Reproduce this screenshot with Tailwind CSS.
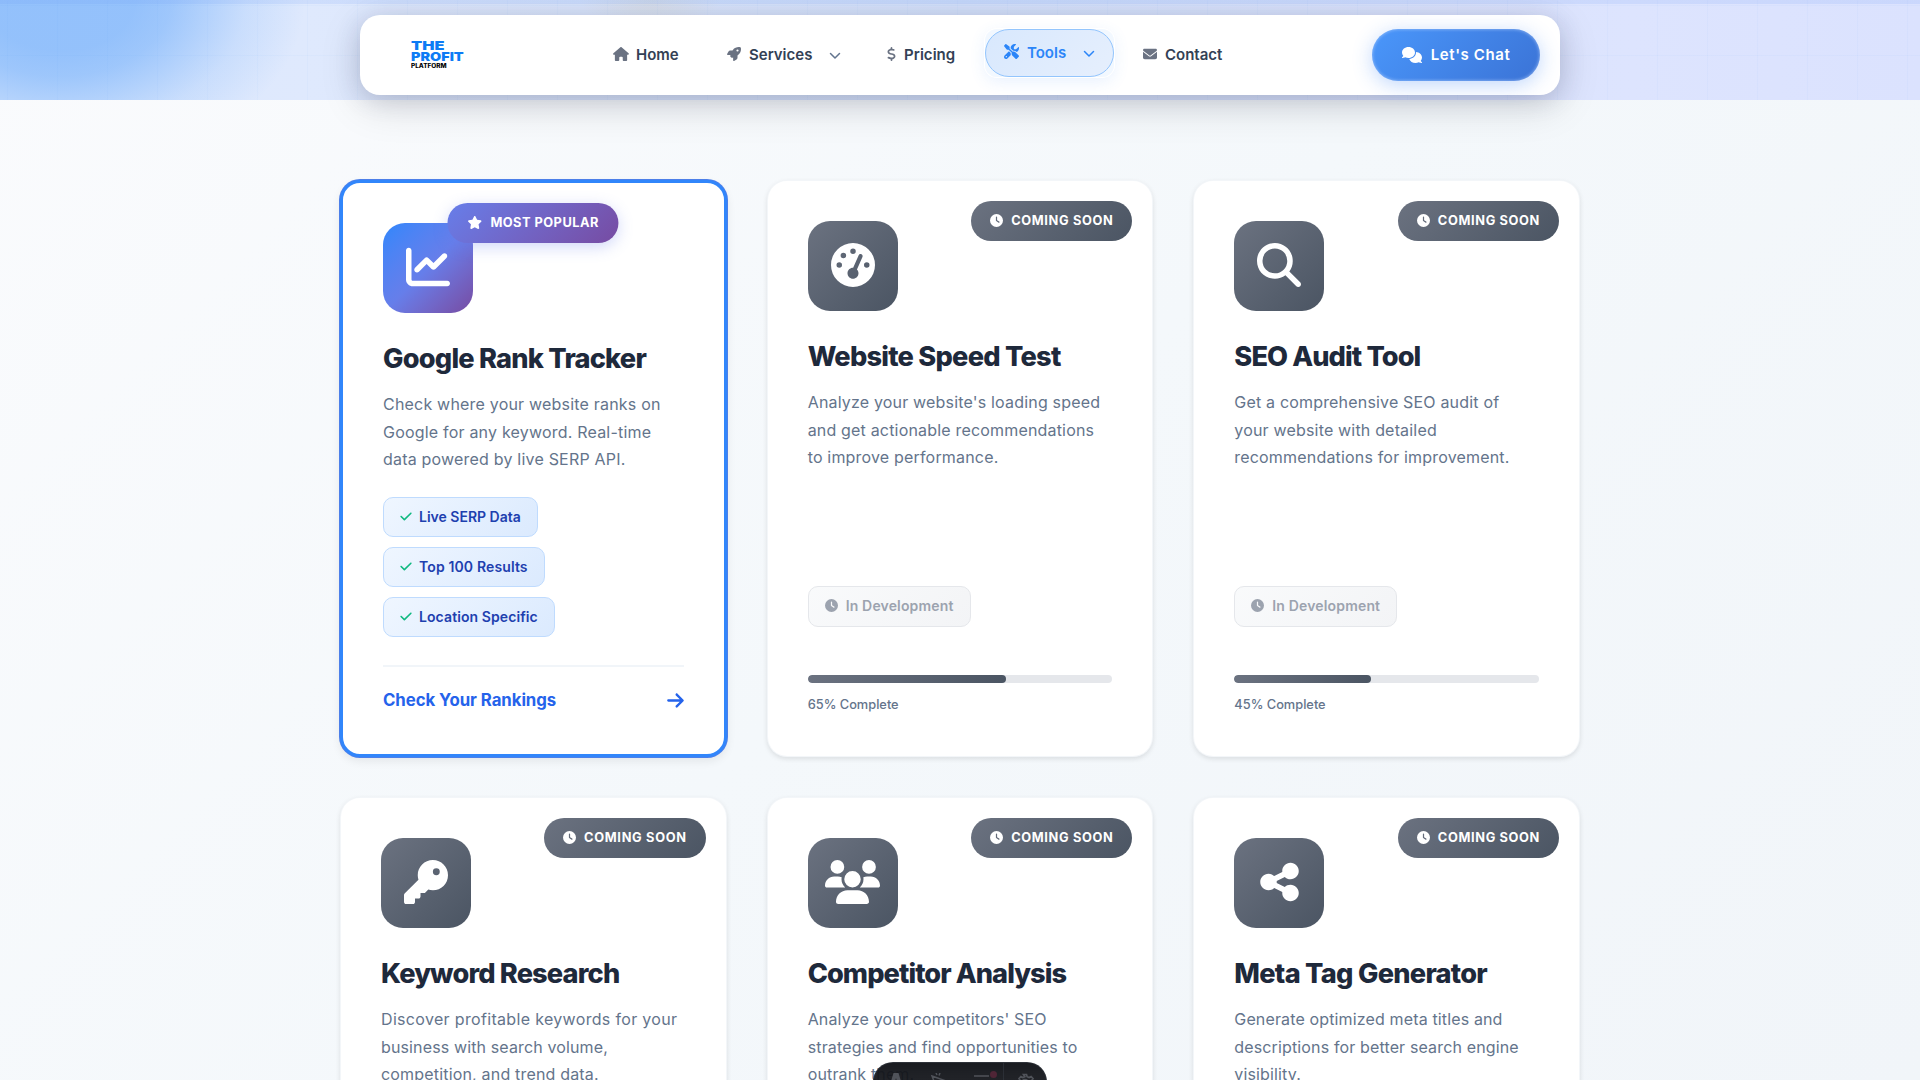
<!DOCTYPE html>
<html lang="en">
<head>
<meta charset="utf-8">
<title>The Profit Platform - Tools</title>
<script src="https://cdn.jsdelivr.net/npm/@tailwindcss/browser@4"></script>
</head>
<body class="relative h-[1080px] overflow-hidden bg-linear-135 from-[#fafbfd] via-[#f4f8fb] to-[#f1f5f9] font-['Inter',sans-serif] text-[#1e293b]">

<svg class="hidden">
  <symbol id="home" viewBox="0 0 576 512"><path d="M575.8 255.5c0 18-15 32.1-32 32.1l-32 0 .7 160.2c0 2.7-.2 5.4-.5 8.1l0 16.2c0 22.1-17.9 40-40 40l-16 0c-1.1 0-2.2 0-3.3-.1c-1.4 .1-2.8 .1-4.2 .1L416 512l-24 0c-22.1 0-40-17.9-40-40l0-24 0-64c0-17.7-14.3-32-32-32l-64 0c-17.7 0-32 14.3-32 32l0 64 0 24c0 22.1-17.9 40-40 40l-24 0-31.9 0c-1.5 0-3-.1-4.5-.2c-1.2 .1-2.4 .2-3.6 .2l-16 0c-22.1 0-40-17.9-40-40l0-112c0-.9 0-1.9 .1-2.8l0-69.7-32 0c-18 0-32-14-32-32.1c0-9 3-17 10-24L266.4 8c7-7 15-8 22-8s15 2 21 7L564.8 231.5c8 7 12 15 11 24z"/></symbol>
  <symbol id="rocket" viewBox="0 0 512 512"><path d="M156.6 384.9L125.7 354c-8.5-8.5-11.5-20.8-7.7-32.2c3-8.9 7-20.5 11.8-33.8L24 288c-8.6 0-16.6-4.6-20.9-12.1s-4.2-16.7 .2-24.1l52.5-88.5c13-21.9 36.5-35.3 61.9-35.3l82.3 0c2.4-4 4.8-7.7 7.2-11.3C289.1-4.1 411.1-8.1 483.9 5.3c11.6 2.1 20.6 11.2 22.8 22.8c13.4 72.9 9.3 194.8-111.4 276.7c-3.5 2.4-7.3 4.8-11.3 7.2v82.3c0 25.4-13.4 49-35.3 61.9l-88.5 52.5c-7.4 4.4-16.6 4.5-24.1 .2s-12.1-12.2-12.1-20.9V380.8c-14.1 4.9-26.4 8.9-35.7 11.9c-11.2 3.6-23.4 .5-31.8-7.8zM384 168a40 40 0 1 0 0-80 40 40 0 1 0 0 80z"/></symbol>
  <symbol id="dollar" viewBox="0 0 320 512"><path d="M160 0c17.7 0 32 14.3 32 32l0 35.7c1.6 .2 3.1 .4 4.7 .7c.4 .1 .7 .1 1.1 .2l48 8.8c17.4 3.2 28.9 19.9 25.7 37.2s-19.9 28.9-37.2 25.7l-47.5-8.7c-31.3-4.6-58.9-1.5-78.3 6.2s-27.2 18.3-29 28.1c-2 10.7-.5 16.7 1.2 20.4c1.8 3.9 5.5 8.3 12.8 13.2c16.3 10.7 41.3 17.7 73.7 26.3l2.9 .8c28.6 7.6 63.6 16.8 89.6 33.8c14.2 9.3 27.6 21.9 35.9 39.5c8.5 17.9 10.3 37.9 6.4 59.2c-6.9 38-33.1 63.4-65.6 76.7c-13.7 5.6-28.6 9.2-44.4 11l0 33.4c0 17.7-14.3 32-32 32s-32-14.3-32-32l0-34.9c-.4-.1-.9-.1-1.3-.2l-.2 0c-24.4-3.8-64.5-14.3-91.5-26.3c-16.1-7.2-23.4-26.1-16.2-42.2s26.1-23.4 42.2-16.2c20.9 9.3 55.3 18.5 75.2 21.6c31.9 4.7 58.2 2 76-5.3c16.9-6.9 24.6-16.9 26.8-28.9c1.9-10.6 .4-16.7-1.3-20.4c-1.9-4-5.6-8.4-13-13.3c-16.4-10.7-41.5-17.7-74-26.3l-2.8-.7C119.4 279.3 84.4 270 58.4 253c-14.2-9.3-27.5-22-35.8-39.6c-8.4-17.9-10.1-37.9-6.1-59.2C23.7 116 52.3 91.2 84.8 78.3c13.3-5.3 27.9-8.9 43.2-11L128 32c0-17.7 14.3-32 32-32z"/></symbol>
  <symbol id="tools" viewBox="0 0 512 512"><path d="M78.6 5C69.1-2.4 55.6-1.5 47 7L7 47c-8.5 8.5-9.4 22-2.1 31.6l80 104c4.5 5.9 11.6 9.4 19 9.4l54.1 0 109 109c-14.7 29-10 65.4 14.3 89.6l112 112c12.5 12.5 32.8 12.5 45.3 0l64-64c12.5-12.5 12.5-32.8 0-45.3l-112-112c-24.2-24.2-60.6-29-89.6-14.3l-109-109 0-54.1c0-7.5-3.5-14.5-9.4-19L78.6 5zM19.9 396.1C7.2 408.8 0 426.1 0 444.1C0 481.6 30.4 512 67.9 512c18 0 35.3-7.2 48-19.9L233.7 374.3c-7.8-20.9-9-43.6-3.6-65.1l-61.7-61.7L19.9 396.1zM512 144c0-10.5-1.1-20.7-3.2-30.5c-2.4-11.2-16.1-14.1-24.2-6l-63.9 63.9c-3 3-7.1 4.7-11.3 4.7L352 176c-8.8 0-16-7.2-16-16l0-57.4c0-4.2 1.7-8.3 4.7-11.3l63.9-63.9c8.1-8.1 5.2-21.8-6-24.2C388.7 1.1 378.5 0 368 0C288.5 0 224 64.5 224 144l0 .8 85.3 85.3c36-9.1 75.8 .5 104 28.7L429 274.5c49-23 83-72.8 83-130.5zM56 432a24 24 0 1 1 48 0 24 24 0 1 1 -48 0z"/></symbol>
  <symbol id="envelope" viewBox="0 0 512 512"><path d="M48 64C21.5 64 0 85.5 0 112c0 15.1 7.1 29.3 19.2 38.4L236.8 313.6c11.4 8.5 27 8.5 38.4 0L492.8 150.4c12.1-9.1 19.2-23.3 19.2-38.4c0-26.5-21.5-48-48-48L48 64zM0 176L0 384c0 35.3 28.7 64 64 64l384 0c35.3 0 64-28.7 64-64l0-208L294.4 339.2c-22.8 17.1-54 17.1-76.8 0L0 176z"/></symbol>
  <symbol id="comments" viewBox="0 0 640 512"><path d="M208 352c114.9 0 208-78.8 208-176S322.9 0 208 0S0 78.8 0 176c0 38.6 14.7 74.3 39.6 103.4c-3.5 9.4-8.7 17.7-14.2 24.7c-4.8 6.2-9.7 11-13.3 14.3c-1.8 1.6-3.3 2.9-4.3 3.7c-.5 .4-.9 .7-1.1 .8l-.2 .2C1 327.2-1.4 334.4 .8 340.9S9.1 352 16 352c21.8 0 43.8-5.6 62.1-12.5c9.2-3.5 17.8-7.4 25.2-11.4C134.1 343.3 169.8 352 208 352zM448 176c0 112.3-99.1 196.9-216.5 207C255.8 457.4 336.4 512 432 512c38.2 0 73.9-8.7 104.7-23.9c7.5 4 16 7.9 25.2 11.4c18.3 6.9 40.3 12.5 62.1 12.5c6.9 0 13.1-4.5 15.2-11.1c2.1-6.6-.2-13.8-5.8-17.9l-.2-.2c-.2-.2-.6-.4-1.1-.8c-1-.8-2.5-2-4.3-3.7c-3.6-3.3-8.5-8.1-13.3-14.3c-5.5-7-10.7-15.4-14.2-24.7c24.9-29 39.6-64.7 39.6-103.4c0-92.8-84.9-168.9-192.6-175.5c.4 5.1 .6 10.3 .6 15.5z"/></symbol>
  <symbol id="star" viewBox="0 0 576 512"><path d="M316.9 18C311.6 7 300.4 0 288.1 0s-23.4 7-28.8 18L195 150.3 51.4 171.5c-12 1.8-22 10.2-25.7 21.7s-.7 24.2 7.9 32.7L137.8 329 113.2 474.7c-2 12 3 24.2 12.9 31.3s23 8 33.8 2.3l128.3-68.5 128.3 68.5c10.8 5.7 23.9 4.9 33.8-2.3s14.9-19.3 12.9-31.3L438.5 329 542.7 225.9c8.6-8.5 11.7-21.2 7.9-32.7s-13.7-19.9-25.7-21.7L381.2 150.3 316.9 18z"/></symbol>
  <symbol id="clock" viewBox="0 0 512 512"><path d="M256 0a256 256 0 1 1 0 512A256 256 0 1 1 256 0zM232 120l0 136c0 8 4 15.5 10.7 20l96 64c11 7.4 25.9 4.4 33.3-6.7s4.4-25.9-6.7-33.3L280 243.2 280 120c0-13.3-10.7-24-24-24s-24 10.7-24 24z"/></symbol>
  <symbol id="chart" viewBox="0 0 512 512"><path d="M64 64c0-17.7-14.3-32-32-32S0 46.3 0 64L0 400c0 44.2 35.8 80 80 80l400 0c17.7 0 32-14.3 32-32s-14.3-32-32-32L80 416c-8.8 0-16-7.2-16-16L64 64zm406.6 86.6c12.5-12.5 12.5-32.8 0-45.3s-32.8-12.5-45.3 0L320 210.7l-57.4-57.4c-12.5-12.5-32.8-12.5-45.3 0l-112 112c-12.5 12.5-12.5 32.8 0 45.3s32.8 12.5 45.3 0L240 221.3l57.4 57.4c12.5 12.5 32.8 12.5 45.3 0l128-128z"/></symbol>
  <symbol id="gauge" viewBox="0 0 512 512"><path d="M0 256a256 256 0 1 1 512 0A256 256 0 1 1 0 256zM288 96a32 32 0 1 0 -64 0 32 32 0 1 0 64 0zM256 416c35.3 0 64-28.7 64-64c0-17.4-6.9-33.1-18.1-44.6L366 161.7c5.3-12.1-.2-26.3-12.3-31.6s-26.3 .2-31.6 12.3L257.9 288c-.6 0-1.3 0-1.9 0c-35.3 0-64 28.7-64 64s28.7 64 64 64zM176 144a32 32 0 1 0 -64 0 32 32 0 1 0 64 0zM96 288a32 32 0 1 0 0-64 32 32 0 1 0 0 64zm352-32a32 32 0 1 0 -64 0 32 32 0 1 0 64 0z"/></symbol>
  <symbol id="search" viewBox="0 0 512 512"><path d="M416 208c0 45.9-14.9 88.3-40 122.7L502.6 457.4c12.5 12.5 12.5 32.8 0 45.3s-32.8 12.5-45.3 0L330.7 376c-34.4 25.2-76.8 40-122.7 40C93.1 416 0 322.9 0 208S93.1 0 208 0S416 93.1 416 208zM208 352a144 144 0 1 0 0-288 144 144 0 1 0 0 288z"/></symbol>
  <symbol id="key" viewBox="0 0 512 512"><path d="M336 352c97.2 0 176-78.8 176-176S433.2 0 336 0S160 78.8 160 176c0 18.7 2.9 36.8 8.3 53.7L7 391c-4.5 4.5-7 10.6-7 17l0 80c0 13.3 10.7 24 24 24l80 0c13.3 0 24-10.7 24-24l0-40 40 0c13.3 0 24-10.7 24-24l0-40 40 0c6.4 0 12.5-2.5 17-7l33.3-33.3c16.9 5.4 35 8.3 53.7 8.3zM376 96a40 40 0 1 1 0 80 40 40 0 1 1 0-80z"/></symbol>
  <symbol id="users" viewBox="0 0 640 512"><path d="M144 0a80 80 0 1 1 0 160A80 80 0 1 1 144 0zM512 0a80 80 0 1 1 0 160A80 80 0 1 1 512 0zM0 298.7C0 239.8 47.8 192 106.7 192l42.7 0c15.9 0 31 3.5 44.6 9.7c-1.3 7.2-1.9 14.7-1.9 22.3c0 38.2 16.8 72.5 43.3 96c-.2 0-.4 0-.7 0L21.3 320C9.6 320 0 310.4 0 298.7zM405.3 320c-.2 0-.4 0-.7 0c26.6-23.5 43.3-57.8 43.3-96c0-7.6-.7-15-1.9-22.3c13.6-6.3 28.7-9.7 44.6-9.7l42.7 0C592.2 192 640 239.8 640 298.7c0 11.8-9.6 21.3-21.3 21.3l-213.3 0zM224 224a96 96 0 1 1 192 0 96 96 0 1 1 -192 0zM128 485.3C128 411.7 187.7 352 261.3 352l117.3 0C452.3 352 512 411.7 512 485.3c0 14.7-11.9 26.7-26.7 26.7l-330.7 0c-14.7 0-26.7-11.9-26.7-26.7z"/></symbol>
  <symbol id="share" viewBox="0 0 448 512"><path d="M352 224c53 0 96-43 96-96s-43-96-96-96s-96 43-96 96c0 4 .2 8 .7 11.9l-94.1 47C145.4 170.2 121.9 160 96 160c-53 0-96 43-96 96s43 96 96 96c25.9 0 49.4-10.2 66.6-26.9l94.1 47c-.5 3.9-.7 7.8-.7 11.9c0 53 43 96 96 96s96-43 96-96s-43-96-96-96c-25.9 0-49.4 10.2-66.6 26.9l-94.1-47c.5-3.9 .7-7.8 .7-11.9s-.2-8-.7-11.9l94.1-47C302.6 213.8 326.1 224 352 224z"/></symbol>
  <symbol id="arrow" viewBox="0 0 448 512"><path d="M438.6 278.6c12.5-12.5 12.5-32.8 0-45.3l-160-160c-12.5-12.5-32.8-12.5-45.3 0s-12.5 32.8 0 45.3L338.8 224 32 224c-17.7 0-32 14.3-32 32s14.3 32 32 32l306.7 0L233.4 393.4c-12.5 12.5-12.5 32.8 0 45.3s32.8 12.5 45.3 0l160-160z"/></symbol>
  <symbol id="check" viewBox="0 0 448 512"><path d="M438.6 105.4c12.5 12.5 12.5 32.8 0 45.3l-256 256c-12.5 12.5-32.8 12.5-45.3 0l-128-128c-12.5-12.5-12.5-32.8 0-45.3s32.8-12.5 45.3 0L160 338.7 393.4 105.4c12.5-12.5 32.8-12.5 45.3 0z"/></symbol>
  <symbol id="chevron" viewBox="0 0 12 8"><path d="M1.5 1.5 6 6l4.500-4.500" fill="none" stroke="currentColor" stroke-width="1.500" stroke-linecap="round" stroke-linejoin="round"/></symbol>
</svg>

<!-- hero strip behind the navigation -->
<div class="h-[100px] w-full overflow-hidden bg-[linear-gradient(to_bottom,rgba(100,150,245,0.14)_4px,transparent_4px),radial-gradient(ellipse_70px_30px_at_650px_0px,rgba(214,200,160,0.2),transparent),radial-gradient(ellipse_245px_170px_at_60px_0px,rgba(96,165,250,0.58)_30%,rgba(96,165,250,0.5)_45%,rgba(96,165,250,0.16)_76%,transparent_100%),linear-gradient(90deg,#dbe8fd_0%,#dfe9fd_16%,#d5e2fb_50%,#dde4fe_85%,#dbe2fe_100%)]">
  <div class="h-full w-full bg-[linear-gradient(rgba(59,130,246,0.03)_1px,transparent_1px),linear-gradient(90deg,rgba(59,130,246,0.03)_1px,transparent_1px)] bg-[size:50px_50px] bg-[position:7px_5px]"></div>
</div>

<header class="absolute top-[15px] left-[360px] z-10 flex h-20 w-[1200px] items-center rounded-[20px] bg-white pr-5 pl-[51px] shadow-[0_10px_40px_rgba(0,0,0,0.15),0_4px_24px_rgba(80,90,150,0.18)]">
  <div class="mt-px flex w-[202px] flex-col items-start">
    <div class="h-[10px] origin-left scale-x-[1.36] text-[12px] leading-[10px] font-black text-[#0d7bf5]">THE</div>
    <div class="h-[12px] origin-left scale-x-[1.2] text-[12px] leading-[12px] font-black text-[#0d7bf5]">PROFIT</div>
    <div class="h-[7px] origin-left scale-x-[1.15] text-[5.600px] leading-[7px] font-extrabold text-black">PLATFORM</div>
  </div>
  <nav class="flex flex-1 items-center text-[15px] font-semibold text-[#334155]">
    <a class="flex w-[114px] items-center gap-[7px]"><svg class="-mt-0.5 h-[14px] w-4 fill-gray-500"><use href="#home"/></svg>Home</a>
    <a class="flex w-[160px] items-center"><svg class="-mt-0.5 mr-2 size-[14px] fill-gray-500"><use href="#rocket"/></svg>Services<svg class="mt-0.5 ml-[17px] h-2 w-3 text-slate-500"><use href="#chevron"/></svg></a>
    <a class="flex w-[98px] items-center tracking-[0.05px]"><svg class="-mt-0.5 mr-2 h-[14px] w-[9px] fill-gray-500"><use href="#dollar"/></svg>Pricing</a>
    <div class="-mt-1 w-[129px] rounded-[12px] bg-blue-50/80 shadow-[0_4px_16px_rgba(59,130,246,0.12)] ring-1 ring-white">
      <a class="flex h-12 items-center rounded-[24px] border border-[#93c5fd] bg-linear-135 from-[#d8e8fd] to-[#e6effd] pl-[18px] text-[#2b85f8]"><svg class="-mt-1 mr-2 size-[15px] fill-current"><use href="#tools"/></svg><span>Tools</span><svg class="mt-0.5 ml-[17px] h-2 w-3"><use href="#chevron"/></svg></a>
    </div>
    <a class="ml-[29px] flex items-center"><svg class="-mt-0.5 mr-2 size-[14px] fill-gray-500"><use href="#envelope"/></svg>Contact</a>
  </nav>
  <a class="flex h-[52px] w-[168px] items-center justify-center gap-[9px] rounded-[26px] bg-linear-135 from-[#4a97fb] to-[#3b73d6] text-[15px] font-semibold tracking-[0.600px] text-white shadow-[0_4px_20px_rgba(59,130,246,0.32),inset_0_0_3px_1px_rgba(190,215,255,0.45)]"><svg class="h-4 w-5 fill-white"><use href="#comments"/></svg>Let's Chat</a>
</header>

<main class="mx-auto mt-20 grid w-[1240px] grid-cols-3 gap-10">

  <article class="relative flex h-[577px] flex-col items-start rounded-[20px] border-3 border-[#3186fb] bg-white p-10 shadow-[0_0_0_1px_#4c7fe9,0_4px_10px_rgba(0,0,0,0.08)]">
    <div class="absolute top-5 left-1/2 flex h-10 -translate-x-1/2 items-center rounded-[20px] bg-linear-135 from-[#667eea] to-[#764ba2] px-5 text-[12.800px] font-bold tracking-[0.480px] whitespace-nowrap text-white shadow-[0_4px_15px_rgba(102,126,234,0.3)]"><svg class="-mt-0.5 mr-2 h-[13px] w-[14.600px] fill-white"><use href="#star"/></svg>MOST POPULAR</div>
    <div class="flex size-[90px] items-center justify-center rounded-[22px] bg-linear-135 from-[#2d87fc] via-[#667eea] to-[#764ba2]"><svg class="-mt-0.5 size-11 fill-white"><use href="#chart"/></svg></div>
    <h3 class="mt-[26px] text-[27.200px] leading-[40px] font-extrabold tracking-[-0.780px] whitespace-nowrap">Google Rank Tracker</h3>
    <p class="mt-3 text-base leading-[27.500px] tracking-[0.200px] text-[#64748b]">Check where your website ranks on<br>Google for any keyword. Real-time<br>data powered by live SERP API.</p>
    <div class="mt-[23px] flex flex-col items-start gap-2.5 text-[14px] font-semibold text-[#1e40af]">
      <span class="flex h-10 items-center rounded-[10px] border border-[#bfdbfe] bg-linear-135 from-[#eff6ff] to-[#dbeafe] px-4 pb-px"><svg class="mr-[7px] h-[13px] w-3 fill-[#10b981]"><use href="#check"/></svg>Live SERP Data</span>
      <span class="flex h-10 items-center rounded-[10px] border border-[#bfdbfe] bg-linear-135 from-[#eff6ff] to-[#dbeafe] px-4 pb-px tracking-[0.130px]"><svg class="mr-[7px] h-[13px] w-3 fill-[#10b981]"><use href="#check"/></svg>Top 100 Results</span>
      <span class="flex h-10 items-center rounded-[10px] border border-[#bfdbfe] bg-linear-135 from-[#eff6ff] to-[#dbeafe] px-4 pb-px tracking-[0.090px]"><svg class="mr-[7px] h-[13px] w-3 fill-[#10b981]"><use href="#check"/></svg>Location Specific</span>
    </div>
    <a class="mt-7 flex w-full items-center justify-between border-t-2 border-[#f1f5f9] pt-5 text-[16.800px] leading-[26px] font-bold tracking-[-0.060px] text-[#2563eb]">Check Your Rankings<svg class="mt-0.5 h-[19px] w-[17px] fill-current"><use href="#arrow"/></svg></a>
  </article>

  <article class="relative flex h-[577px] flex-col items-start rounded-[20px] border border-slate-200/40 bg-white p-10 shadow-[0_2px_5px_rgba(0,0,0,0.10)]">
    <div class="absolute top-5 right-5 flex h-10 items-center rounded-[20px] bg-linear-135 from-[#6b7280] to-[#4b5563] px-[19px] text-[12.800px] font-bold tracking-[0.640px] whitespace-nowrap text-white"><svg class="-mt-0.5 mr-2 size-[13px] fill-white"><use href="#clock"/></svg>COMING SOON</div>
    <div class="flex size-[90px] items-center justify-center rounded-[22px] bg-linear-135 from-[#6b7280] to-[#4b5563]"><svg class="-mt-0.5 size-11 fill-white"><use href="#gauge"/></svg></div>
    <h3 class="mt-[26px] text-[27.200px] leading-[40px] font-extrabold tracking-[-0.760px] whitespace-nowrap">Website Speed Test</h3>
    <p class="mt-3 text-base leading-[27.500px] tracking-[0.180px] text-[#64748b]">Analyze your website's loading speed<br>and get actionable recommendations<br>to improve performance.</p>
    <span class="mt-auto flex h-[41px] items-center rounded-[10px] border border-gray-200 bg-linear-135 from-gray-50 to-gray-100 px-4 pb-0.5 text-[14px] font-semibold tracking-[0.160px] text-[#9ca3af]"><svg class="mr-2 size-[13px] fill-current"><use href="#clock"/></svg>In Development</span>
    <div class="mt-12 h-2 w-full overflow-hidden rounded-[4px] bg-gray-200"><div class="h-full rounded-[4px] bg-linear-90 from-[#6b7280] to-[#4b5563]" style="width:65%"></div></div>
    <p class="mt-3 h-[21px] text-[12.800px] leading-5 font-medium text-[#64748b]">65% Complete</p>
  </article>

  <article class="relative flex h-[577px] flex-col items-start rounded-[20px] border border-slate-200/40 bg-white p-10 shadow-[0_2px_5px_rgba(0,0,0,0.10)]">
    <div class="absolute top-5 right-5 flex h-10 items-center rounded-[20px] bg-linear-135 from-[#6b7280] to-[#4b5563] px-[19px] text-[12.800px] font-bold tracking-[0.640px] whitespace-nowrap text-white"><svg class="-mt-0.5 mr-2 size-[13px] fill-white"><use href="#clock"/></svg>COMING SOON</div>
    <div class="flex size-[90px] items-center justify-center rounded-[22px] bg-linear-135 from-[#6b7280] to-[#4b5563]"><svg class="-mt-0.5 size-11 fill-white"><use href="#search"/></svg></div>
    <h3 class="mt-[26px] text-[27.200px] leading-[40px] font-extrabold tracking-[-0.900px] whitespace-nowrap">SEO Audit Tool</h3>
    <p class="mt-3 text-base leading-[27.500px] tracking-[0.180px] text-[#64748b]">Get a comprehensive SEO audit of<br>your website with detailed<br>recommendations for improvement.</p>
    <span class="mt-auto flex h-[41px] items-center rounded-[10px] border border-gray-200 bg-linear-135 from-gray-50 to-gray-100 px-4 pb-0.5 text-[14px] font-semibold tracking-[0.160px] text-[#9ca3af]"><svg class="mr-2 size-[13px] fill-current"><use href="#clock"/></svg>In Development</span>
    <div class="mt-12 h-2 w-full overflow-hidden rounded-[4px] bg-gray-200"><div class="h-full rounded-[4px] bg-linear-90 from-[#6b7280] to-[#4b5563]" style="width:45%"></div></div>
    <p class="mt-3 h-[21px] text-[12.800px] leading-5 font-medium text-[#64748b]">45% Complete</p>
  </article>

  <article class="relative flex h-[577px] flex-col items-start rounded-[20px] border border-slate-200/40 bg-white p-10 shadow-[0_2px_5px_rgba(0,0,0,0.10)]">
    <div class="absolute top-5 right-5 flex h-10 items-center rounded-[20px] bg-linear-135 from-[#6b7280] to-[#4b5563] px-[19px] text-[12.800px] font-bold tracking-[0.680px] whitespace-nowrap text-white"><svg class="-mt-0.5 mr-2 size-[13px] fill-white"><use href="#clock"/></svg>COMING SOON</div>
    <div class="flex size-[90px] items-center justify-center rounded-[22px] bg-linear-135 from-[#6b7280] to-[#4b5563]"><svg class="-mt-0.5 size-11 fill-white"><use href="#key"/></svg></div>
    <h3 class="mt-[26px] text-[27.200px] leading-[40px] font-extrabold tracking-[-0.850px] whitespace-nowrap">Keyword Research</h3>
    <p class="mt-3 text-base leading-[27.500px] text-[#64748b]"><span class="tracking-[0.330px]">Discover profitable keywords for your</span><br><span class="tracking-[0.130px]">business with search volume,</span><br><span class="tracking-[0.180px]">competition, and trend data.</span></p>
  </article>

  <article class="relative flex h-[577px] flex-col items-start rounded-[20px] border border-slate-200/40 bg-white p-10 shadow-[0_2px_5px_rgba(0,0,0,0.10)]">
    <div class="absolute top-5 right-5 flex h-10 items-center rounded-[20px] bg-linear-135 from-[#6b7280] to-[#4b5563] px-[19px] text-[12.800px] font-bold tracking-[0.640px] whitespace-nowrap text-white"><svg class="-mt-0.5 mr-2 size-[13px] fill-white"><use href="#clock"/></svg>COMING SOON</div>
    <div class="flex size-[90px] items-center justify-center rounded-[22px] bg-linear-135 from-[#6b7280] to-[#4b5563]"><svg class="-mt-0.5 h-11 w-[55px] fill-white"><use href="#users"/></svg></div>
    <h3 class="mt-[26px] text-[27.200px] leading-[40px] font-extrabold tracking-[-0.930px] whitespace-nowrap">Competitor Analysis</h3>
    <p class="mt-3 text-base leading-[27.500px] tracking-[0.150px] text-[#64748b]">Analyze your competitors' SEO<br>strategies and find opportunities to<br>outrank them.</p>
  </article>

  <article class="relative flex h-[577px] flex-col items-start rounded-[20px] border border-slate-200/40 bg-white p-10 shadow-[0_2px_5px_rgba(0,0,0,0.10)]">
    <div class="absolute top-5 right-5 flex h-10 items-center rounded-[20px] bg-linear-135 from-[#6b7280] to-[#4b5563] px-[19px] text-[12.800px] font-bold tracking-[0.640px] whitespace-nowrap text-white"><svg class="-mt-0.5 mr-2 size-[13px] fill-white"><use href="#clock"/></svg>COMING SOON</div>
    <div class="flex size-[90px] items-center justify-center rounded-[22px] bg-linear-135 from-[#6b7280] to-[#4b5563]"><svg class="-mt-0.5 h-11 w-[39px] fill-white"><use href="#share"/></svg></div>
    <h3 class="mt-[26px] text-[27.200px] leading-[40px] font-extrabold tracking-[-0.730px] whitespace-nowrap">Meta Tag Generator</h3>
    <p class="mt-3 text-base leading-[27.500px] tracking-[0.140px] text-[#64748b]">Generate optimized meta titles and<br>descriptions for better search engine<br>visibility.</p>
  </article>
</main>

<!-- developer toolbar, mostly below the fold -->
<div class="absolute top-[1062px] left-[873px] z-20 flex h-10 w-[174px] rounded-full border border-[#343841]/60 bg-linear-to-b from-[#13151a]/97 to-[#13151a]/90 text-[#50535a]">
  <div class="flex w-[43px] justify-center pt-[10px]"><svg viewBox="0 0 16 20" class="h-5 w-4 fill-current"><path d="M5.500 0h5L15 15c-2-1-3.500-1.500-4.500-1.500L8 5l-2.500 8.500C4 13.700 2.500 14.200 1 15z"/></svg></div>
  <div class="flex w-[43px] justify-center pt-[10px]"><svg viewBox="0 0 18 18" class="size-[18px] fill-none stroke-current stroke-[1.500]"><path d="M2 3l14 5-6 2.500L7.500 17zM6 0l1 2M10 0L9 2.500"/></svg></div>
  <div class="relative flex w-[43px] justify-center pt-[12px]"><svg viewBox="0 0 18 14" class="h-3.5 w-[18px] fill-none stroke-current stroke-[1.700]"><path d="M1 1h15M1 7h15"/></svg><i class="absolute top-2 right-[6px] size-[7px] rounded-full bg-[#4f2536]"></i></div>
  <div class="flex w-[43px] justify-center border-l border-[#343841]/60 pt-[10px]"><svg viewBox="0 0 20 20" class="size-5 fill-none stroke-current stroke-[1.700]"><circle cx="10" cy="10" r="3.500"/><path d="M8.500 1.500h3l.6 2.200 2 .9 2-1.100 1.900 2-1.200 2 .8 1.800 2 .7v2l-2 .7-.8 1.800 1.200 2-2 2-8 .5-4-2.500 1.200-2-.8-1.800-2-.7v-2l2-.7.800-1.800-1.200-2 1.900-2 2 1.100 2-.9z"/></svg></div>
</div>
</body>
</html>
